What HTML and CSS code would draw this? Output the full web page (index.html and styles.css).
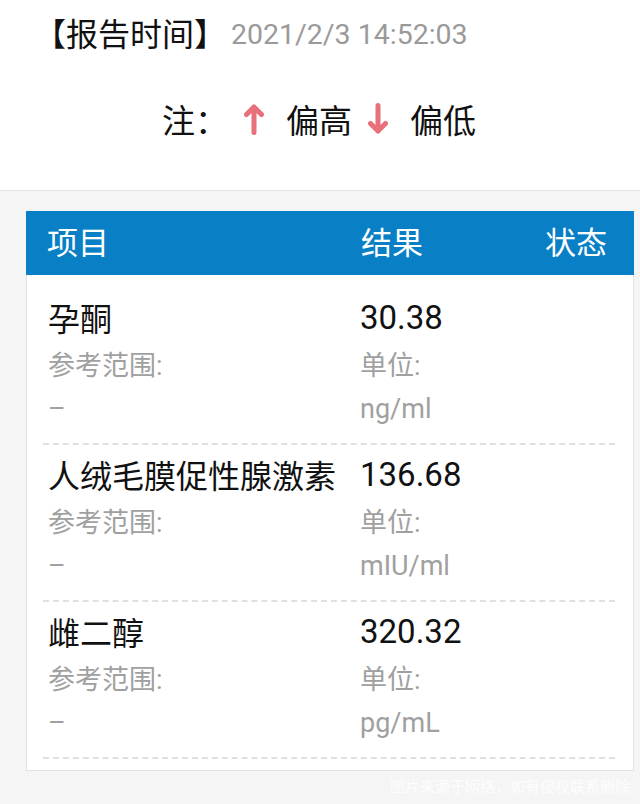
FILE: index.html
```html
<!DOCTYPE html>
<html lang="zh-CN">
<head>
<meta charset="utf-8">
<title>检验报告</title>
<link rel="stylesheet" href="styles.css">
</head>
<body>
<div class="top">
  <div class="time-row"><span class="time-label">【报告时间】</span><span class="time-val">2021/2/3 14:52:03</span></div>
  <div class="note-row">
    <span class="note-label">注：</span>
    <svg class="arrow" width="20" height="32" viewBox="0 0 20 32"><path d="M10 29.5V4M2.5 11.5L10 4l7.5 7.5" fill="none" stroke="#e8707a" stroke-width="5" stroke-linecap="round" stroke-linejoin="round"/></svg>
    <span class="note-text">偏高</span>
    <svg class="arrow" width="20" height="32" viewBox="0 0 20 32"><path d="M10 2.5V28M2.5 20.5L10 28l7.5-7.5" fill="none" stroke="#e8707a" stroke-width="5" stroke-linecap="round" stroke-linejoin="round"/></svg>
    <span class="note-text">偏低</span>
  </div>
</div>
<div class="card">
  <div class="card-head">
    <span class="h-name">项目</span>
    <span class="h-val">结果</span>
    <span class="h-status">状态</span>
  </div>
  <div class="card-body">
    <div class="row">
      <div class="name">孕酮</div><div class="val">30.38</div>
      <div class="sub">参考范围:</div><div class="sub">单位:</div>
      <div class="sub">–</div><div class="sub">ng/ml</div>
    </div>
    <div class="row">
      <div class="name">人绒毛膜促性腺激素</div><div class="val">136.68</div>
      <div class="sub">参考范围:</div><div class="sub">单位:</div>
      <div class="sub">–</div><div class="sub">mIU/ml</div>
    </div>
    <div class="row">
      <div class="name">雌二醇</div><div class="val">320.32</div>
      <div class="sub">参考范围:</div><div class="sub">单位:</div>
      <div class="sub">–</div><div class="sub">pg/mL</div>
    </div>
  </div>
</div>
<div class="watermark">图片来源于网络，如有侵权联系删除</div>
</body>
</html>
```
FILE: styles.css
```css
html, body {
  margin: 0;
  padding: 0;
}
body {
  background: #f5f5f5;
  font-family: Roboto, "Noto Sans CJK SC", sans-serif;
  color: #111;
  width: 640px;
  height: 804px;
  overflow: hidden;
}
.top {
  background: #fff;
  height: 190px;
  border-bottom: 1px solid #e4e4e4;
}
.time-row {
  padding: 12px 0 0 34px;
  height: 46px;
  display: flex;
  align-items: center;
}
.time-label {
  font-size: 32px;
  color: #111;
  line-height: 46px;
}
.time-val {
  font-size: 28.5px;
  color: #9a9a9a;
  margin-left: 5px;
  line-height: 46px;
}
.note-row {
  margin-top: 39px;
  height: 44px;
  display: flex;
  align-items: center;
  padding-left: 162px;
}
.note-label {
  font-size: 33px;
  margin-right: 16px;
}
.note-text {
  font-size: 33px;
  margin: 0 16px 0 22px;
}
.note-text:last-child {
  margin-right: 0;
}
.arrow {
  display: block;
}
.card {
  margin: 20px 6px 0 26px;
  background: #fff;
}
.card-head {
  background: #0980c5;
  height: 64px;
  display: grid;
  grid-template-columns: 314px 1fr auto;
  align-items: center;
  padding: 0 27px 6px 21px;
  box-sizing: border-box;
  color: #fff;
  font-size: 31px;
}
.card-body {
  border: 1px solid #e2e2e2;
  border-top: none;
  padding: 13px 0 11px;
}
.row {
  margin: 0 18px 0 16px;
  padding: 6px 0 11px 5px;
  border-bottom: 2px dashed #e0e0e0;
  display: grid;
  grid-template-columns: 312px 1fr;
  grid-auto-rows: 46px;
  align-items: center;
}
.name {
  font-size: 32px;
  color: #111;
  white-space: nowrap;
}
.val {
  font-size: 33px;
  color: #111;
}
.sub {
  font-size: 27px;
  color: #a0a0a0;
}
.watermark {
  text-align: right;
  padding: 6px 10px 0 0;
  font-size: 15px;
  line-height: 20px;
  color: rgba(255, 255, 255, 0.85);
}
```
